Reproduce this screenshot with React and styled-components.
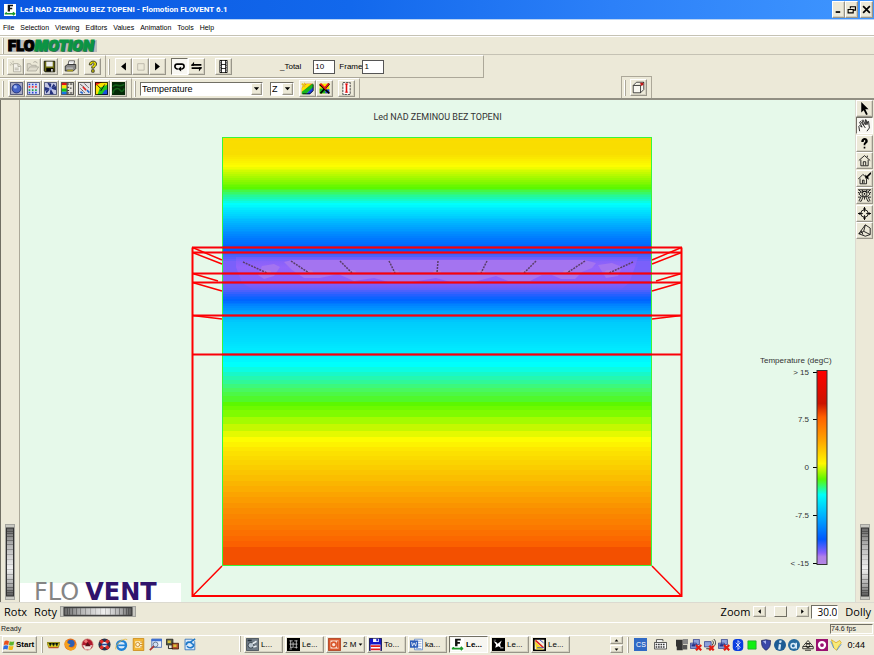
import React, { useState } from "react";
import styled, { createGlobalStyle, css } from "styled-components";

const face = "#ece9d8";
const shadow = "#aca899";
const dark = "#716f64";
const canvas = "#e6f9ea";
const uiFont = '"Liberation Sans", Arial, sans-serif';

const GlobalStyle = createGlobalStyle`
  * { box-sizing: border-box; }
  body { margin: 0; background: ${face}; font-family: ${uiFont}; font-size: 7px; color: #000; }
  button, input, select { font: inherit; color: inherit; margin: 0; padding: 0; }
  svg { display: block; flex: none; }
`;

const raised = css`
  border: 1px solid;
  border-color: #fff #99968a #99968a #fff;
  box-shadow: inset -1px -1px 0 #d3d0c0;
`;

const sunken = css`
  border: 1px solid;
  border-color: ${dark} #fff #fff ${dark};
`;

const Window = styled.div`
  display: flex;
  flex-direction: column;
  min-height: 100vh;
  overflow: hidden;
`;

/* ---------- title bar and menu ---------- */

const TitleBar = styled.header`
  display: flex;
  align-items: center;
  gap: 4px;
  height: 20px;
  padding: 0 1px 0 4px;
  background: linear-gradient(90deg, #0a57e0, #1268ec 40%, #2c80f8 70%, #3f96ff);
  border-bottom: 1px solid #b9d3f5;
`;

const Title = styled.h1`
  flex: 1;
  margin: 0;
  color: #fff;
  font-family: Roboto, sans-serif;
  font-size: 8px;
  font-weight: 700;
  white-space: nowrap;
`;

const Caption = styled.div`
  display: flex;
`;

const CaptionButton = styled.button`
  ${raised}
  display: flex;
  align-items: center;
  justify-content: center;
  width: 13px;
  height: 17px;
  margin-left: ${p => (p.$apart ? 2 : 0)}px;
  background: ${face};
`;

const MenuBar = styled.nav`
  display: flex;
  align-items: center;
  gap: 6px;
  height: 16px;
  padding-left: 3px;
  background: #fff;
  border-bottom: 1px solid #c5c2b4;
`;

const MenuItem = styled.button`
  border: 0;
  background: none;
  font-size: 7px;
`;

/* ---------- toolbars ---------- */

const LogoBar = styled.div`
  display: flex;
  align-items: center;
  gap: 3px;
  height: 19px;
  padding-left: 2px;
  border-top: 1px solid #fff;
  border-bottom: 1px solid #c5c2b4;
`;

const Wordmark = styled.div`
  height: 12px;
  padding: 0 3px 0 0;
  background: #bdbdbd;
  font-family: Inter, sans-serif;
  font-size: 14px;
  line-height: 12px;
  font-weight: 900;
  -webkit-text-stroke: 1px currentColor;

  em { color: #0b9444; text-shadow: 1px 1px 0 #54605a; }
`;

const Grip = styled.span`
  flex: none;
  width: 2px;
  height: 16px;
  margin-right: ${p => p.$gap || 3}px;
  border-left: 1px solid #fff;
  border-right: 1px solid ${shadow};
`;

const ToolRow = styled.div`
  display: flex;
  align-items: flex-end;
  height: ${p => p.$height}px;
`;

const Toolbar = styled.div`
  display: flex;
  align-items: center;
  height: 100%;
  padding-left: 2px;
  padding-right: ${p => p.$end || 4}px;
  border-top: 1px solid #fff;
  border-right: 1px solid ${shadow};
  border-bottom: ${p => (p.$line ? `1px solid ${shadow}` : 0)};
`;

const FloatingBar = styled(Toolbar)`
  height: 22px;
  margin-left: 261px;
  border-top: 1px solid ${shadow};
  border-left: 1px solid ${shadow};
`;

const ToolButton = styled.button`
  ${p => (p.$pressed ? sunken : raised)}
  display: flex;
  align-items: center;
  justify-content: center;
  flex: none;
  width: 17px;
  height: 17px;
  margin-left: ${p => p.$space || 0}px;
  background: ${p => (p.$pressed ? "#f8f7f2" : face)};
`;

const Field = styled.label`
  display: flex;
  align-items: center;
  gap: ${p => p.$gap}px;
  margin-left: ${p => p.$space}px;
  font-size: 8px;
`;

const NumberBox = styled.input`
  width: 22px;
  height: 14px;
  padding-left: 1px;
  border: 1px solid #555;
  background: #fff;
  font-size: 8px;
`;

const SelectWrap = styled.div`
  position: relative;
  width: ${p => p.$width}px;
  height: 14px;
  margin-left: ${p => p.$space}px;
  ${sunken}

  select {
    appearance: none;
    display: block;
    width: 100%;
    height: 100%;
    padding-left: 1px;
    border: 0;
    border-radius: 0;
    background: #fff;
    font-size: 9px;
  }

  span {
    ${raised}
    position: absolute;
    top: 0;
    right: 0;
    bottom: 0;
    display: flex;
    align-items: center;
    justify-content: center;
    width: 11px;
    background: ${face};
    pointer-events: none;
  }
`;

/* ---------- viewer ---------- */

const Viewer = styled.main`
  display: flex;
  flex: 1;
  min-height: 504px;
  border-top: 2px solid #918f83;
`;

const Side = styled.aside`
  display: flex;
  flex-direction: column;
  align-items: center;
  justify-content: space-between;
  flex: none;
  width: 19px;
  padding-right: ${p => (p.$right ? 1 : 0)}px;
  padding-bottom: 2px;
  border-left: 1px solid ${p => (p.$right ? "#dcdad0" : dark)};
`;

const Palette = styled.div`
  display: flex;
  flex-direction: column;
  justify-content: space-between;
  height: 139px;
`;

const Canvas = styled.section`
  display: grid;
  flex: 1;
  min-width: 0;
  background: ${canvas};
  border-left: 1px solid ${shadow};

  > * { grid-area: 1 / 1; }
`;

const Scene = styled.svg`
  width: 100%;
  height: 100%;
`;

const PlotTitle = styled.h2`
  margin: 0;
  padding-top: 12px;
  font-family: Roboto, sans-serif;
  font-size: 9px;
  line-height: 11px;
  font-weight: 400;
  text-align: center;
  color: #333;
`;

const Legend = styled.svg`
  place-self: end;
  margin: 0 23px 34px 0;
  font-size: 8px;
  fill: #333;
`;

const Brand = styled.div`
  display: flex;
  align-items: center;
  gap: 6px;
  align-self: end;
  justify-self: start;
  width: 161px;
  height: 19px;
  padding-left: 14px;
  background: #fff;
  color: #858585;
  font-family: "DejaVu Sans", sans-serif;
  font-size: 24px;
  line-height: 19px;
  white-space: nowrap;

  b { color: #30146c; }
`;

const Controls = styled.div`
  display: flex;
  align-items: center;
  height: 20px;
  padding: 0 3px 2px 4px;
  border-top: 1px solid #dcdad0;
  font-family: "Open Sans", sans-serif;
  font-size: 11px;
`;

const Caps = styled.span`
  margin-right: ${p => p.$after || 0}px;
`;

const Push = styled.span`
  flex: 1;
`;

const StepButton = styled.button`
  ${raised}
  display: flex;
  align-items: center;
  justify-content: center;
  width: 13px;
  height: 11px;
  background: ${face};
`;

const ZoomRange = styled.input`
  appearance: none;
  width: 30px;
  height: 11px;
  background: #f2f0e6;

  &::-webkit-slider-thumb {
    appearance: none;
    width: 13px;
    height: 11px;
    background: ${face};
    border: 1px solid;
    border-color: #fff ${dark} ${dark} #fff;
  }
`;

const ZoomValue = styled.input`
  ${sunken}
  width: 27px;
  height: 14px;
  margin: 0 7px 0 2px;
  background: #fff;
  font-size: 10px;
  text-align: right;
`;

const StatusBar = styled.footer`
  display: flex;
  align-items: center;
  justify-content: space-between;
  height: 13px;
  padding: 0 1px 1px;
  border-top: 1px solid #fff;
  color: #222;
`;

const StatusPane = styled.span`
  ${sunken}
  width: 43px;
  height: 10px;
  line-height: 8px;
`;

/* ---------- taskbar ---------- */

const TaskBar = styled.div`
  display: flex;
  align-items: center;
  height: 20px;
  padding: 0 9px 2px 2px;
  border-top: 1px solid #fff;
`;

const StartButton = styled.button`
  ${raised}
  display: flex;
  align-items: center;
  gap: 1px;
  width: 35px;
  height: 17px;
  margin-right: 4px;
  background: ${face};
  font-size: 8px;
  font-weight: 700;
`;

const QuickLaunch = styled.div`
  display: flex;
  gap: 4px;
  padding-left: 1px;
  margin-right: 43px;
`;

const IconButton = styled.button`
  display: flex;
  border: 0;
  background: none;
`;

const Tasks = styled.div`
  display: flex;
  flex: 1;
  gap: 2px;
`;

const Task = styled.button`
  ${p => (p.$active ? sunken : raised)}
  display: flex;
  align-items: center;
  gap: 2px;
  width: 39px;
  height: 17px;
  padding-left: 1px;
  background: ${p => (p.$active ? "#f7f6f1" : face)};
  font-size: 8px;
  font-weight: ${p => (p.$active ? 700 : 400)};
  white-space: nowrap;
`;

const Spin = styled.div`
  display: flex;
  flex-direction: column;
  gap: 1px;
  margin-right: 4px;

  button { height: 8px; }
`;

const Language = styled.button`
  width: 13px;
  height: 13px;
  margin: 0 7px 0 4px;
  border: 0;
  background: #316ac5;
  color: #fff;
  font-size: 7px;
`;

const Tray = styled.div`
  display: flex;
  gap: 2px;
  margin: 0 5px 0 9px;
`;

const Clock = styled.time`
  font-size: 9px;
`;

/* ---------- icons ---------- */

const line = { fill: "none", stroke: "#000" };

const icons = {
  app: (
    <>
      <path fill="#fff" d="M0 0h16v16H0z" />
      <path fill="#111" d="M5 1h7v2H8v2h3v2H8v3H5z" />
      <path fill="none" stroke="#1d9a2b" strokeWidth="2" d="M1 13h14M3 11v3M12 11l2 2-2 2" />
    </>
  ),
  blank: (
    <path fill="#f4f2ea" stroke="#aaa79a" d="M5.500 4.500h6l3 3v7h-9zM11 5v3h3M7 10h5M7 12h5M2 3l3 3M5 1v2M1 6h2" />
  ),
  open: (
    <path fill="#dedbcd" stroke="#aaa79a" d="M1.500 13.500v-9h4l1 2h6v2M1.500 13.500l3-5h11l-3 5zM9 3c2-2 4-1 5 1" />
  ),
  save: (
    <>
      <path fill="#6c6c10" stroke="#000" d="M1.500 1.500h13v13h-12l-1-1z" />
      <path fill="#eee" d="M4 2h8v6H4z" />
      <path d="M4 10h9v4H4z" />
      <path fill="#ddd" d="M10 11h2v3h-2z" />
    </>
  ),
  print: (
    <>
      <path fill="#fff" stroke="#444" d="M5 6l1-5h7l-1 5z" />
      <path fill="#888" stroke="#222" d="M1.500 7.500l3-2h10v5l-3 3h-10z" />
      <path stroke="#ddd" d="M3 10h8M7 3h4" />
      <path fill="#aa9e20" d="M4 12h7v2H4z" />
    </>
  ),
  help: (
    <path fill="#e8e000" stroke="#222" d="M4 6c0-6 9-6 9-1 0 3-3 3-3 5H7c0-4 3-3 3-5 0-2-3-2-3 1zM7 12h3v3H7z" />
  ),
  prev: <path d="M11 3v10L5 8z" />,
  stop: <path fill="none" stroke="#b5b2a4" d="M4.500 4.500h8v8h-8z" />,
  next: <path d="M5 3v10l6-5z" />,
  loop: (
    <>
      <path {...line} strokeWidth="2" d="M6 11H5c-4-1-3-6 0-6h6c3 0 4 5 0 6h-1" />
      <path d="M10 8v6l-4-3z" />
    </>
  ),
  swap: (
    <>
      <path {...line} strokeWidth="2" d="M2 6h12M2 10h12" />
      <path d="M5 7V2L1 7zM11 9v5l4-5z" />
    </>
  ),
  film: (
    <>
      <path fill="#fff" stroke="#000" d="M3.500.5h9v15h-9z" />
      <path {...line} d="M5.500 0v16M10.500 0v16M5 5.500h6M5 10.500h6" />
      <path {...line} strokeDasharray="1 2" d="M4.500 0v16M11.500 0v16" />
    </>
  ),
  sphere: (
    <>
      <path fill="#a9abc4" stroke="#333a60" d="M.5.500h15v15H.5z" />
      <circle cx="8" cy="8" r="5.500" fill="#4664c6" stroke="#1a2a70" />
      <circle cx="6.500" cy="6" r="2" fill="#a7bdf5" />
    </>
  ),
  grid: (
    <>
      <path fill="#d8dcf0" stroke="#333a60" d="M.5.500h15v15H.5z" />
      <path stroke="#2445d8" strokeWidth="2" strokeDasharray="2 2" d="M2 3h12M2 13h12" />
      <path stroke="#e33" strokeWidth="2" strokeDasharray="2 2" d="M2 6h12" />
      <path stroke="#19a34a" strokeWidth="2" strokeDasharray="2 2" d="M2 10h12" />
    </>
  ),
  fan: (
    <>
      <path fill="#c3c6e2" stroke="#333a60" d="M.5.500h15v15H.5z" />
      <path fill="#23307c" d="M8 8L4 1l5 1zM8 8l7-3v5zM8 8l4 7H7zM8 8l-7 3V6zM8 8l4-6 2 3zM8 8l-5 6-1-3z" />
      <circle cx="8" cy="8" r="2" fill="#8ea0e8" />
    </>
  ),
  scale: (
    <>
      <path fill="#e6e3da" stroke="#222" d="M.5.500h15v15H.5z" />
      <path fill="#e21212" d="M1 1h6v3H1z" />
      <path fill="#f4e500" d="M1 4h6v4H1z" />
      <path fill="#12c41c" d="M1 8h6v4H1z" />
      <path fill="#1678e6" d="M1 12h6v3H1z" />
      <path {...line} d="M7.500 1v14M8 2.500h2M8 6.500h2M8 10.500h2M8 13.500h2M11 2.500h3M11 7.500h2M11 13.500h3" />
    </>
  ),
  vectors: (
    <>
      <path fill="#e4e2e6" stroke="#222" d="M.5.500h15v15H.5z" />
      <path {...line} strokeDasharray="2 1" d="M3 3l4 3M8 2l5 5M3 8l5 5" />
      <path stroke="#d22" strokeWidth="2" d="M6 6l4 4" />
      <path stroke="#26c" strokeWidth="2" d="M11 10l3 3M3 12l3 2" />
    </>
  ),
  contour: (
    <>
      <path fill="#f02010" d="M0 0h16v16H0z" />
      <path fill="#f9e400" d="M0 5L9 0h7v6L3 16H0z" />
      <path fill="#20c820" d="M3 16l3-9 10-4v8l-9 5z" />
      <path fill="#1b4ee0" d="M8 16l4-6 4-1v7z" />
      <path {...line} d="M.5.500h15v15H.5zM3 4l4 4M12 3l-5 8" />
    </>
  ),
  texture: (
    <>
      <path fill="#062a08" d="M0 0h16v16H0z" />
      <path fill="none" stroke="#14601a" strokeWidth="2" d="M1 6c4-6 7 2 14-3M1 14c1-7 7-7 9-4s4 1 5-2" />
    </>
  ),
  plane: (
    <>
      <path fill="#f02010" d="M1 7l5-5h9L1 15z" />
      <path fill="#f9e400" d="M1 13V7l6-5h6z" />
      <path fill="#18b820" d="M1 15v-3L14 2h1v5L6 15z" />
      <path fill="#1b3ee0" d="M6 15l9-9v5l-4 4z" />
      <path {...line} d="M2 14.500h9l4-4V3" />
      <path stroke="#e8c020" strokeWidth="2" d="M1 2l4 4M5 1L2 6" />
    </>
  ),
  planeOff: (
    <>
      <path fill="#f9e400" d="M2 2h12v12H2z" />
      <path fill="#18b820" d="M2 14V8h7v6z" />
      <path fill="#1b3ee0" d="M9 14V9h5v5z" />
      <path stroke="#000" strokeWidth="2" d="M2 3l12 11M14 2L3 14" />
      <path stroke="#f01818" strokeWidth="2" d="M3 2l7 7M13 2l-5 6" />
    </>
  ),
  probe: (
    <>
      <path fill="#fff" stroke="#222" strokeDasharray="3 1" d="M3.500.500h9v15h-9z" />
      <path stroke="#e01010" strokeWidth="2" d="M8 2v11" />
      <path stroke="#e01010" d="M6 2.500h4M6 12.500h4" />
    </>
  ),
  cube: (
    <>
      <path fill="#f8f7f0" stroke="#222" d="M1.500 5.500l4-4h9v9l-4 4h-9zM1.500 5.500h9l4-4M10.500 5.500v9" />
      <path fill="#c01818" d="M10 2h4v3l-3 1z" />
    </>
  ),
  arrow: <path d="M4 0v13l3-3 3 6 2-1-3-6h4z" />,
  hand: (
    <path {...line} d="M2 15L1 9l1-1 3 2L2 4l1-1 4 5-2-6 1-1 3 6V1h1l1 6 1-4h1l1 8-3 4M7 8l2 3" />
  ),
  question: (
    <path d="M4 6c0-6 8-6 8-1 0 3-3 3-3 5H7c0-4 2-3 2-5 0-2-2-2-2 1zM7 12h2v2H7z" />
  ),
  home: (
    <path {...line} d="M1 8l7-6 7 6M3.500 7v7.500h9V7M11.500 4V2M6.500 14V9.500h3V14" />
  ),
  setHome: (
    <>
      <path {...line} d="M0 9l6-6 7 6M2.500 8v6.500h8V8M5.500 14v-4h2v4" />
      <path d="M9 8V3l5 5z" />
      <path stroke="#000" strokeWidth="2" d="M16 1l-5 5" />
    </>
  ),
  viewAll: (
    <>
      <path {...line} d="M1 6c4-4 10-4 14 0-4 5-10 5-14 0zM0 1h16M1 1l3 3M15 1l-3 3M5 1l1 2M11 1l-1 2M0 4l2 1M16 4l-2 1M4 9l-3 6M12 9l3 6M6 10l-2 5M10 10l2 5M8 10v3M0 10h3M13 10h3M2 15h2M12 15h2" />
      <circle cx="8" cy="6" r="3" {...line} />
      <circle cx="8" cy="6" r="1" />
    </>
  ),
  seek: (
    <>
      <circle cx="8" cy="8" r="4.500" {...line} />
      <path {...line} d="M8 0v6M8 10v6M0 8h6M10 8h6" />
      <path d="M6 3l2-3 2 3zM6 13l2 3 2-3zM3 6L0 8l3 2zM13 6l3 2-3 2z" />
    </>
  ),
  camera: (
    <path {...line} d="M1 12L9 1l6 4v8l-6 2zM9 1L7 9l8 4M7 9l-6 3M4 8l2 5" />
  ),
  windows: (
    <>
      <path fill="#e8501c" d="M2 3c2-2 4-1 6 0L7 8C5 7 3 7 1 8z" />
      <path fill="#5fb42c" d="M9 3c2 1 4 1 6 0l-1 5c-2 1-4 1-6 0z" />
      <path fill="#2f6ce0" d="M1 9c2-1 4-1 6 0l-1 5c-2-1-4-1-6 0z" />
      <path fill="#f5bb1a" d="M8 9c2 1 4 1 6 0l-1 5c-2 1-4 1-6 0z" />
    </>
  ),
  totals: (
    <>
      <path fill="#e8d020" stroke="#8a8010" d="M0 5.500h16l-2 6H2z" />
      <path stroke="#33521c" d="M2 6l2 4 2-4 2 4 2-4 2 4 2-4" />
      <path stroke="#c8321c" d="M2 12h12" />
    </>
  ),
  firefox: (
    <>
      <circle cx="8" cy="8" r="7.500" fill="#e8701a" />
      <circle cx="8.500" cy="6.500" r="4.500" fill="#2c5fb4" />
      <path fill="#f6a21c" d="M1 5l3-3v4l4 2-3 2 4 2c4 0 5-3 5-6 3 8-3 10-7 9S0 10 1 5z" />
    </>
  ),
  redBall: (
    <>
      <circle cx="8" cy="8" r="7" fill="#b0182c" stroke="#d9aa9a" />
      <path fill="#f3e6df" d="M2 9h12l-3 5H5z" />
      <path fill="#5a0f18" d="M5 10l3-5 4 5z" />
      <circle cx="6" cy="4" r="2" fill="#e77" />
    </>
  ),
  wheel: (
    <>
      <circle cx="8" cy="8" r="7.500" fill="#28354e" />
      <path stroke="#e02c24" strokeWidth="4" d="M3 3l3 3M13 13l-3-3M13 3l-3 3M3 13l3-3" />
      <circle cx="8" cy="8" r="3" fill="#fff" />
      <path stroke="#234a9a" strokeWidth="2" d="M5 8h6" />
    </>
  ),
  ie: (
    <>
      <circle cx="8" cy="9" r="5.500" fill="#d9ecfb" stroke="#2183d6" strokeWidth="3" />
      <path stroke="#2183d6" strokeWidth="2" d="M4 9h10" />
      <path fill="none" stroke="#e9b93c" d="M1 14C-1 9 10-1 15 2" />
    </>
  ),
  outlook: (
    <>
      <path fill="#f2b636" stroke="#c98614" d="M1.500.500h13v15h-13z" />
      <path fill="#fff3cf" d="M4 4h8v8H4z" />
      <circle cx="7" cy="8" r="2.500" fill="none" stroke="#c07a10" />
      <path stroke="#c07a10" d="M10 5h3M10 8h3M10 11h3" />
    </>
  ),
  notes: (
    <>
      <path fill="#eaf1fb" stroke="#3d62ae" d="M3.500 1.500h12v10h-12z" />
      <path fill="#3d6fd0" d="M3 1h13v3H3z" />
      <circle cx="8" cy="8" r="3" fill="#cfe0f6" stroke="#567" />
      <path stroke="#a33" strokeWidth="2" d="M6 10l-5 5" />
    </>
  ),
  network: (
    <>
      <path fill="#555d44" stroke="#222" d="M.5 1.500h8v7h-8z" />
      <path fill="#b6542c" stroke="#3a1408" d="M7.500 6.500h8v7h-8z" />
      <path fill="#d8c23a" d="M2 3h4v3H2zM9 8h4v3H9z" />
      <path {...line} d="M3 9v4h5" />
    </>
  ),
  sync: (
    <>
      <path fill="#dbeafa" stroke="#2a6cb8" d="M2.500 1.500h9l3 3v10h-12z" />
      <path fill="none" stroke="#1d78c8" strokeWidth="2" d="M4 9c0-5 6-5 8-1M13 7c1 6-6 6-8 3M9 5l6-4" />
    </>
  ),
  tool: (
    <>
      <path fill="#6f7b86" stroke="#3b444c" d="M.5.500h15v15H.5z" />
      <circle cx="6" cy="9" r="3.500" fill="#b8c4ce" stroke="#27323c" />
      <path stroke="#e8eef2" strokeWidth="2" d="M8 7l5-3M9 11l4-1" />
      <path fill="#27323c" d="M2 2h5v2H2z" />
    </>
  ),
  pixels: (
    <>
      <path d="M0 0h16v16H0z" />
      <path stroke="#ccc" d="M3 3.500h4M9 3.500h4M3 7.500h10M4 11.500h3M9 11.500h4M3 13.500h3" />
      <path stroke="#ccc" d="M4.500 3v9M7.500 5v7M11.500 3v10" />
    </>
  ),
  powerpoint: (
    <>
      <path fill="#d9572c" stroke="#a6391a" d="M.5.500h15v15H.5z" />
      <path fill="#fbe5da" d="M3 3h10v10H3z" />
      <circle cx="7" cy="8" r="3" fill="none" stroke="#d9572c" strokeWidth="2" />
      <path stroke="#d9572c" strokeWidth="2" d="M12 4v8" />
    </>
  ),
  floppy: (
    <>
      <path fill="#1418c8" stroke="#06083c" d="M.5.500h15v15H.5z" />
      <path fill="#fff" d="M5 1h7v4H5zM2 8h12v8H2z" />
      <path fill="#1418c8" d="M9 1h2v3H9z" />
      <path stroke="#e02020" strokeWidth="2" d="M2 10h12M2 14h12" />
    </>
  ),
  word: (
    <>
      <path fill="#fff" stroke="#5b82c4" d="M5.500 1.500h10v13h-10z" />
      <path stroke="#7d9bd0" d="M10 4h4M10 7h4M10 10h4M7 13h7" />
      <path fill="#2b5cb8" d="M0 3h10v9H0z" />
      <path fill="none" stroke="#fff" d="M2 5l1 5 2-4 2 4 1-5" />
    </>
  ),
  viewer: (
    <>
      <path d="M0 0h16v16H0z" />
      <path fill="#fff" d="M2 4l3 1 2 2 5-4-2 5 1 4-3-2-4 2 1-4z" />
      <path fill="#888" d="M10 11h4v2h-4zM2 2h3v1H2z" />
    </>
  ),
  chart: (
    <>
      <path fill="#f4f0e0" stroke="#000" strokeWidth="2" d="M1 1h14v14H1z" />
      <path fill="#f6d820" d="M2 4l11 10H4z" />
      <path stroke="#e02018" strokeWidth="2" d="M3 3l10 9" />
      <path stroke="#1b3ec8" d="M5 12h8M8 2l5 4" />
    </>
  ),
  keyboard: (
    <>
      <path fill="#fff" stroke="#333" d="M.5 5.500h15v8H.5zM3 5V2h8v2" />
      <path stroke="#333" strokeWidth="2" strokeDasharray="2 1" d="M2 8h12M2 11h12" />
    </>
  ),
  panels: (
    <>
      <path fill="#333" d="M0 1h9v9H0zM1 9h8v6H1z" />
      <path fill="#888" d="M9 0h7v7H9z" />
      <path fill="#555" d="M9 8h6v6H9z" />
    </>
  ),
  netOff: (
    <>
      <path fill="#8ea2dc" stroke="#26348a" d="M4.500.500h8v7h-8zM.5 5.500h8v7h-8z" />
      <path fill="#26348a" d="M2 7h5v3H2z" />
      <path stroke="#e01c14" strokeWidth="3" d="M8 8l7 7M15 8l-7 7" />
    </>
  ),
  wifiOff: (
    <>
      <path fill="#8ea2dc" stroke="#26348a" d="M.5 3.500h9v7h-9z" />
      <path {...line} d="M11 2c2 2 2 4 0 6M13 0c3 3 3 6 1 9M3 13h5" />
      <path stroke="#e01c14" strokeWidth="3" d="M7 9l6 6M13 9l-6 6" />
    </>
  ),
  bluetooth: (
    <>
      <rect x="1" width="14" height="16" rx="5" fill="#0a3ce0" />
      <path fill="none" stroke="#fff" d="M5 5l6 6-3 3V2l3 3-6 6" />
    </>
  ),
  green: <path fill="#10f010" stroke="#2a9a34" d="M2.500 2.500h11v11h-11z" />,
  shield: (
    <>
      <path fill="#3a48a8" stroke="#1c2460" d="M2 2l6-1 6 1c0 7-1 10-6 13-5-3-6-6-6-13z" />
      <path fill="#a9b6ee" d="M4 3l4-1v5z" />
    </>
  ),
  info: (
    <>
      <circle cx="8" cy="8" r="8" fill="#1d5c94" />
      <path stroke="#d9ecfa" strokeWidth="3" d="M9 2L8 5M8 7l-1 7" />
    </>
  ),
  ring: (
    <>
      <circle cx="8" cy="8" r="8" fill="#276a9e" />
      <circle cx="7" cy="9" r="3" fill="none" stroke="#d9ecfa" strokeWidth="2" />
      <path stroke="#d9ecfa" strokeWidth="2" d="M11 5v8" />
    </>
  ),
  recycle: (
    <>
      <path {...line} d="M2 9L8 2l6 7M1 10h14v3H1zM5 6h6M4 15h8" />
      <circle cx="8" cy="9" r="2.500" {...line} />
    </>
  ),
  avira: (
    <>
      <path fill="#9a1070" d="M0 0h16v16H0z" />
      <circle cx="8" cy="8" r="4" fill="none" stroke="#fff" strokeWidth="3" />
    </>
  ),
  flower: (
    <>
      <path fill="#f8ea78" stroke="#d8a81c" d="M2 1l6 4 5-3 2 3-3 4-3 6-4-3z" />
      <path stroke="#3c8fe0" d="M1 3l4 9M9 15l6-8" />
    </>
  ),
  minimize: <path d="M3 11h8v3H3z" />,
  restore: <path fill="none" stroke="#000" strokeWidth="2" d="M6 6V3h9v6h-3M2 8h9v6H2z" />,
  close: <path stroke="#000" strokeWidth="3" d="M2 2l12 12M14 2L2 14" />,
  down: <path d="M2 5h12l-6 7z" />,
  up: <path d="M2 11h12L8 4z" />,
  left: <path d="M11 3v10L5 8z" />,
  right: <path d="M5 3v10l6-5z" />
};

const Icon = ({ name, size = 12 }) => (
  <svg width={size} height={size} viewBox="0 0 16 16" aria-hidden="true">
    {icons[name]}
  </svg>
);

const Tool = ({ name, ...rest }) => (
  <ToolButton type="button" aria-label={name} {...rest}>
    <Icon name={name} size={13} />
  </ToolButton>
);

const Dropdown = ({ label, options, ...rest }) => (
  <SelectWrap {...rest}>
    <select aria-label={label}>
      {options.map(option => (
        <option key={option}>{option}</option>
      ))}
    </select>
    <span>
      <Icon name="down" size={7} />
    </span>
  </SelectWrap>
);

/* ---------- thumb wheels ---------- */

const notches = [0, 2, 5, 9, 13, 18, 23, 28, 33, 38, 43, 48, 52, 56, 59, 61];

const Wheel = ({ vertical }) => (
  <svg
    width={vertical ? 10 : 76}
    height={vertical ? 76 : 11}
    viewBox={vertical ? "0 0 10 76" : "0 0 76 10"}
    preserveAspectRatio="none"
    aria-hidden="true"
  >
    <g transform={vertical ? "matrix(0 1 1 0 0 0)" : undefined}>
      <rect width="76" height="10" fill="#a3a39d" />
      <rect x="1" y="1" width="74" height="8" fill="#c8c8c2" />
      <rect x="4" y="1.500" width="68" height="7" fill="url(#wheel)" stroke="#333" />
      {notches.map(n => (
        <path key={n} stroke="#444" strokeOpacity={0.15 + Math.abs(n - 31) / 60} d={`M${n + 7.500} 2v6`} />
      ))}
    </g>
  </svg>
);

/* ---------- temperature field ---------- */

const field = [
  [137, "#fadc00"], [153, "#f8de00"], [165, "#fdfd00"], [172, "#c4fa00"],
  [180, "#8cf800"], [187, "#5cf800"], [192, "#38f868"], [197, "#1cf8b0"],
  [203, "#00fffc"], [212, "#00dcff"], [225, "#00a8ff"], [238, "#0078ff"],
  [249, "#005cff"], [253, "#3c60fa"], [261, "#7a60fa"], [279, "#7c60fa"],
  [288, "#6060fa"], [294, "#2460ff"], [299, "#0064ff"], [306, "#008cff"],
  [315, "#00b4fc"], [322, "#00ccfc"], [340, "#00defe"], [352, "#00f0ff"],
  [362, "#00fffc"], [372, "#18f8c8"], [380, "#30f898"], [388, "#48f860"],
  [396, "#50f82c"], [402, "#5cf800"], [410, "#80fb00"], [417, "#a4fb00"],
  [424, "#c4f800"], [431, "#e4fa00"], [437, "#fdfd00"], [447, "#fde800"],
  [460, "#fad400"], [475, "#fabe00"], [492, "#fba400"], [508, "#fa8c00"],
  [525, "#fb7800"], [541, "#fb6000"], [547, "#f35000"], [566, "#f25000"]
];

const mix = (a, b, t) =>
  "#" +
  [1, 3, 5]
    .map(i => {
      const from = parseInt(a.slice(i, i + 2), 16);
      const to = parseInt(b.slice(i, i + 2), 16);
      return Math.round(from + (to - from) * t).toString(16).padStart(2, "0");
    })
    .join("");

const bands = [];
field.slice(0, -1).forEach(([y, color], i) => {
  const [end, next] = field[i + 1];
  const height = y > 350 ? 5 : 2;
  const count = Math.max(1, Math.round((end - y) / height));
  for (let n = 0; n < count; n++) {
    bands.push([y + ((end - y) * n) / count, mix(color, next, n / count)]);
  }
});

const floors = [247.5, 252.5, 273.5, 282.5, 315.5, 354.5];
const edges = [[247.5, 222, 260], [252.5, 222, 264], [273.5, 218, 281], [282.5, 222, 291], [315.5, 222, 319]];
const baffles = [
  [243, 262, 267, 273], [291, 261, 309, 273], [340, 261, 352, 273],
  [389, 261, 395, 273], [438, 261, 437, 273], [487, 261, 481, 273],
  [536, 261, 524, 273], [585, 261, 567, 273], [633, 262, 609, 273]
];

const frameHalf = edges.map(([y, x, end]) => `M192.500 ${y}L${x} ${end}`).join("");

const Plot = () => (
  <Scene viewBox="20 100 835 502" role="img" aria-label="Temperature field">
    <defs>
      <linearGradient id="wheel">
        <stop offset="0" stopColor="#666" />
        <stop offset="0.25" stopColor="#b4b4b4" />
        <stop offset="0.6" stopColor="#f0f0f0" />
        <stop offset="0.85" stopColor="#a8a8a8" />
        <stop offset="1" stopColor="#555" />
      </linearGradient>
      <linearGradient id="warm" x2="0" y2="1">
        <stop offset="0" stopColor="#9060fa" stopOpacity="0.3" />
        <stop offset="0.3" stopColor="#9464fa" />
        <stop offset="0.75" stopColor="#8c5cfa" />
        <stop offset="1" stopColor="#6c60fa" stopOpacity="0" />
      </linearGradient>
    </defs>
    <g shapeRendering="crispEdges">
      {bands.map(([y, color], i) => (
        <rect key={i} x="222" y={y} width="430" height={(bands[i + 1] ? bands[i + 1][0] : 566) - y} fill={color} />
      ))}
    </g>
    <path fill="url(#warm)" d="M236 257H638l-3 10-6 16-10 8H256l-14-8-6-16z" />
    <path
      fill="#a474f0"
      d="M284 262l8-2H584l12 3-4 5-10 4-7 7h-14l-9-4h-10l-12 6h-22l-12-5-22 6h-24l-14-4-24 4h-24l-14-4-20 3-16-7-18 4h-16l-12-8zM262 266l12-2 6 3-6 9-10 3-6-4zM598 265l14-2 10 4-4 9-12 2z"
    />
    <path fill="none" stroke="#39f53c" shapeRendering="crispEdges" d="M222.500 137.500h429v428h-429z" />
    {baffles.map(([x1, y1, x2, y2]) => (
      <g key={x1}>
        <ellipse cx={x2} cy={y2 - 1} rx="4" ry="2" fill="#b888d8" opacity="0.7" />
        <path fill="none" stroke="#5a3e68" strokeWidth="1.500" strokeDasharray="2 1" d={`M${x1} ${y1}L${x2} ${y2}`} />
      </g>
    ))}
    {floors.map(y => (
      <g key={y}>
        <path stroke="#a02060" strokeOpacity="0.3" strokeWidth="3" d={`M222 ${y}H652`} />
        <path stroke="#fa0008" strokeWidth="2" d={`M192 ${y}H682`} />
      </g>
    ))}
    <path
      fill="none"
      stroke="#f00"
      strokeWidth="1.500"
      d={`${frameHalf}M192.500 596L222 566M681.500 596L652 566`}
    />
    <path fill="none" stroke="#f00" strokeWidth="1.500" transform="matrix(-1 0 0 1 874 0)" d={frameHalf} />
    <path fill="none" stroke="#f00" strokeWidth="2" d="M192.500 247.500V596h489V247.500" />
  </Scene>
);

const ticks = [["> 15", 18], ["7.5", 65], ["0", 113], ["-7.5", 161], ["< -15", 209]];

const Scale = () => (
  <Legend width="72" height="214" viewBox="0 0 72 214">
    <defs>
      <linearGradient id="scale" x2="0" y2="1">
        <stop offset="0" stopColor="#ff0000" />
        <stop offset="0.17" stopColor="#cc1400" />
        <stop offset="0.24" stopColor="#ff6000" />
        <stop offset="0.36" stopColor="#ffa400" />
        <stop offset="0.48" stopColor="#fff800" />
        <stop offset="0.56" stopColor="#5cf800" />
        <stop offset="0.64" stopColor="#00fff8" />
        <stop offset="0.75" stopColor="#00b0ff" />
        <stop offset="0.87" stopColor="#0058ff" />
        <stop offset="0.94" stopColor="#8860fa" />
        <stop offset="0.96" stopColor="#b080e8" />
        <stop offset="1" stopColor="#b486e4" />
      </linearGradient>
    </defs>
    <text x="0" y="9">Temperature (degC)</text>
    {ticks.map(([label, y]) => (
      <g key={label}>
        <text x="49" y={y + 3} textAnchor="end">{label}</text>
        <path stroke="#000" d={`M53 ${y + 0.500}h4`} />
      </g>
    ))}
    <rect x="57" y="16.500" width="10" height="194" fill="url(#scale)" stroke="#333" />
  </Legend>
);

const menus = ["File", "Selection", "Viewing", "Editors", "Values", "Animation", "Tools", "Help"];
const views = ["sphere", "grid", "fan", "scale", "vectors", "contour", "texture"];
const modes = ["arrow", "hand", "question", "home", "setHome", "viewAll", "seek", "camera"];
const shortcuts = ["totals", "firefox", "redBall", "wheel", "ie", "outlook", "notes", "network", "sync"];
const tasks = [
  ["tool", "L..."], ["pixels", "Le..."], ["powerpoint", "2 M"], ["floppy", "To..."],
  ["word", "ka..."], ["app", "Le..."], ["viewer", "Le..."], ["chart", "Le..."]
];
const tray = [
  "panels", "netOff", "wifiOff", "netOff", "bluetooth", "green",
  "shield", "info", "ring", "recycle", "avira", "flower"
];

export default function App() {
  const [mode, setMode] = useState("hand");
  const [zoom, setZoom] = useState(45);

  return (
    <Window>
      <GlobalStyle />
      <TitleBar>
        <Icon name="app" />
        <Title>Led NAD ZEMINOU BEZ TOPENI - Flomotion FLOVENT 6.1</Title>
        <Caption>
          <CaptionButton type="button" aria-label="Minimize"><Icon name="minimize" size={9} /></CaptionButton>
          <CaptionButton type="button" aria-label="Restore"><Icon name="restore" size={9} /></CaptionButton>
          <CaptionButton type="button" aria-label="Close" $apart><Icon name="close" size={9} /></CaptionButton>
        </Caption>
      </TitleBar>
      <MenuBar>
        {menus.map(menu => (
          <MenuItem type="button" key={menu}>{menu}</MenuItem>
        ))}
      </MenuBar>
      <LogoBar>
        <Grip $gap={1} />
        <Wordmark>FLO<em>MOTION</em></Wordmark>
      </LogoBar>

      <ToolRow $height={23}>
        <Toolbar $line>
          <Grip $gap={3} />
          <Tool name="blank" />
          <Tool name="open" />
          <Tool name="save" />
          <Tool name="print" $space={4} />
          <Tool name="help" $space={5} />
        </Toolbar>
        <Toolbar $line $end={99}>
          <Grip $gap={5} />
          <Tool name="prev" />
          <Tool name="stop" />
          <Tool name="next" />
          <Tool name="loop" $pressed $space={5} />
          <Tool name="swap" />
          <Tool name="film" $space={10} />
          <Field $space={48} $gap={12}>
            _Total
            <NumberBox defaultValue="10" />
          </Field>
          <Field $space={4} $gap={0}>
            Frame
            <NumberBox defaultValue="1" />
          </Field>
        </Toolbar>
      </ToolRow>
      <ToolRow $height={20}>
        <Toolbar>
          <Grip $gap={4} />
          {views.map(name => (
            <Tool name={name} key={name} />
          ))}
        </Toolbar>
        <Toolbar>
          <Grip $gap={1} />
          <Dropdown label="Variable" options={["Temperature", "Pressure", "Speed"]} $width={123} $space={3} />
          <Dropdown label="Axis" options={["Z", "Y", "X"]} $width={24} $space={7} />
          <Tool name="plane" $space={5} />
          <Tool name="planeOff" />
          <Tool name="probe" $space={5} />
        </Toolbar>
        <FloatingBar>
          <Grip $gap={4} />
          <Tool name="cube" />
        </FloatingBar>
      </ToolRow>

      <Viewer>
        <Side>
          <span />
          <Wheel vertical />
        </Side>
        <Canvas>
          <Plot />
          <PlotTitle>Led NAD ZEMINOU BEZ TOPENI</PlotTitle>
          <Scale />
          <Brand>FLO<b>VENT</b></Brand>
        </Canvas>
        <Side $right>
          <Palette>
            {modes.map(name => (
              <Tool name={name} key={name} $pressed={mode === name} onClick={() => setMode(name)} />
            ))}
          </Palette>
          <Wheel vertical />
        </Side>
      </Viewer>

      <Controls>
        <Caps $after={7}>Rotx</Caps>
        <Caps $after={3}>Roty</Caps>
        <Wheel />
        <Push />
        <Caps $after={3}>Zoom</Caps>
        <StepButton type="button" aria-label="Zoom out" onClick={() => setZoom(zoom - 5)}>
          <Icon name="left" size={7} />
        </StepButton>
        <ZoomRange
          type="range"
          aria-label="Zoom"
          value={zoom}
          onChange={e => setZoom(Number(e.target.value))}
        />
        <StepButton type="button" aria-label="Zoom in" onClick={() => setZoom(zoom + 5)}>
          <Icon name="right" size={7} />
        </StepButton>
        <ZoomValue aria-label="Zoom value" defaultValue="30.0" />
        <Caps>Dolly</Caps>
      </Controls>
      <StatusBar>
        Ready
        <StatusPane>74.6 fps</StatusPane>
      </StatusBar>

      <TaskBar>
        <StartButton type="button">
          <Icon name="windows" />
          Start
        </StartButton>
        <Grip $gap={3} />
        <QuickLaunch>
          {shortcuts.map(name => (
            <IconButton type="button" aria-label={name} key={name}>
              <Icon name={name} size={13} />
            </IconButton>
          ))}
        </QuickLaunch>
        <Tasks>
          <Grip $gap={1} />
          {tasks.map(([icon, label], i) => (
            <Task type="button" key={i} $active={icon === "app"}>
              <Icon name={icon} size={13} />
              {label}
              {icon === "powerpoint" && <Icon name="down" size={5} />}
            </Task>
          ))}
        </Tasks>
        <Spin>
          <StepButton type="button" aria-label="Scroll up"><Icon name="up" size={5} /></StepButton>
          <StepButton type="button" aria-label="Scroll down"><Icon name="down" size={5} /></StepButton>
        </Spin>
        <Grip $gap={1} />
        <Language type="button">CS</Language>
        <Icon name="keyboard" size={13} />
        <Tray>
          {tray.map((name, i) => (
            <Icon name={name} key={i} />
          ))}
        </Tray>
        <Clock>0:44</Clock>
      </TaskBar>
    </Window>
  );
}
